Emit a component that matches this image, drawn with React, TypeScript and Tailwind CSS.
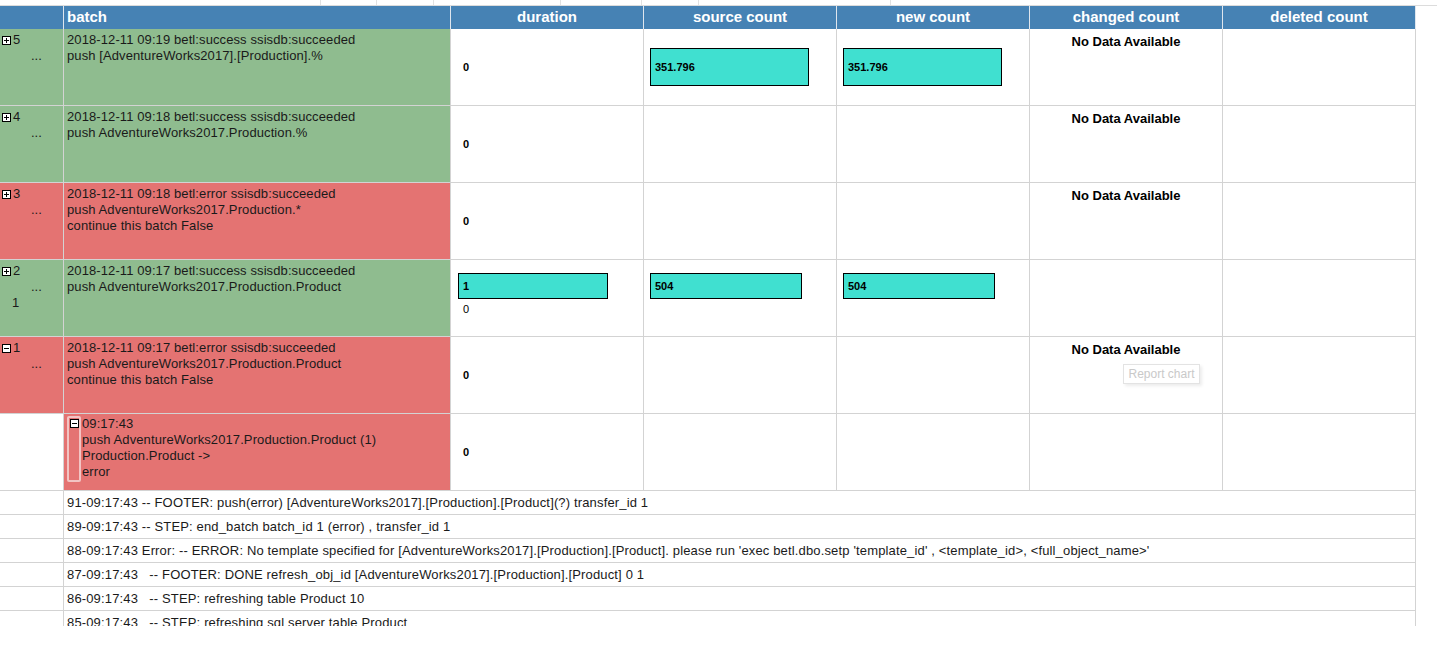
import React from 'react'

type Bar = { value: string; width: number; height: number }

type BatchRow = {
  id: number
  ok: boolean
  expanded?: boolean
  extra?: string
  lines: string[]
  duration?: Bar
  source?: Bar
  target?: Bar
  noData?: boolean
  tooltip?: boolean
}

const rows: BatchRow[] = [
  {
    id: 5,
    ok: true,
    lines: ['2018-12-11 09:19 betl:success ssisdb:succeeded', 'push [AdventureWorks2017].[Production].%'],
    source: { value: '351.796', width: 159, height: 38 },
    target: { value: '351.796', width: 159, height: 38 },
    noData: true,
  },
  {
    id: 4,
    ok: true,
    lines: ['2018-12-11 09:18 betl:success ssisdb:succeeded', 'push AdventureWorks2017.Production.%'],
    noData: true,
  },
  {
    id: 3,
    ok: false,
    lines: ['2018-12-11 09:18 betl:error ssisdb:succeeded', 'push AdventureWorks2017.Production.*', 'continue this batch False'],
    noData: true,
  },
  {
    id: 2,
    ok: true,
    extra: '1',
    lines: ['2018-12-11 09:17 betl:success ssisdb:succeeded', 'push AdventureWorks2017.Production.Product'],
    duration: { value: '1', width: 150, height: 26 },
    source: { value: '504', width: 152, height: 26 },
    target: { value: '504', width: 152, height: 26 },
  },
  {
    id: 1,
    ok: false,
    expanded: true,
    lines: ['2018-12-11 09:17 betl:error ssisdb:succeeded', 'push AdventureWorks2017.Production.Product', 'continue this batch False'],
    noData: true,
    tooltip: true,
  },
]

const logLines = [
  '91-09:17:43 -- FOOTER: push(error) [AdventureWorks2017].[Production].[Product](?) transfer_id 1',
  '89-09:17:43 -- STEP: end_batch batch_id 1 (error) , transfer_id 1',
  "88-09:17:43 Error: -- ERROR: No template specified for [AdventureWorks2017].[Production].[Product]. please run 'exec betl.dbo.setp 'template_id' , <template_id>, <full_object_name>'",
  '87-09:17:43   -- FOOTER: DONE refresh_obj_id [AdventureWorks2017].[Production].[Product] 0 1',
  '86-09:17:43   -- STEP: refreshing table Product 10',
  '85-09:17:43   -- STEP: refreshing sql server table Product',
]

const headers = ['duration', 'source count', 'new count', 'changed count', 'deleted count']

function ToggleIcon({ open }: { open: boolean }) {
  return (
    <svg width="9" height="9" viewBox="0 0 9 9" className="shrink-0">
      <rect x="0.5" y="0.5" width="8" height="8" fill="#fff" stroke="#000" />
      <line x1="2" y1="4.5" x2="7" y2="4.5" stroke="#000" />
      {!open && <line x1="4.5" y1="2" x2="4.5" y2="7" stroke="#000" />}
    </svg>
  )
}

function BarCell({ bar }: { bar: Bar }) {
  return (
    <div
      className="flex items-center border border-black bg-[#40e0d0] pl-[4px] text-[11px] font-bold text-black"
      style={{ width: bar.width, height: bar.height }}
    >
      {bar.value}
    </div>
  )
}

const cell = 'border-r border-b border-[#d3d3d3] relative'

export default function App() {
  const stripes = [321, 56, 57, 127, 81, 57, 192]

  return (
    <div className="w-[1437px] h-[648px] overflow-hidden bg-white font-['Liberation_Sans',Arial,sans-serif] text-[13px] text-[#1a1a1a]">
      <div className="flex h-[6px] border-b border-[#dcdcdc]">
        {stripes.map((w, i) => (
          <div key={i} className="h-full shrink-0 border-r border-[#e2e2e2]" style={{ width: w }} />
        ))}
      </div>

      <div className="h-[620px] w-[1416px] overflow-hidden">
        <div className="grid grid-cols-[64px_387px_193px_193px_193px_193px_193px]">
          <div className="h-[23px] border-r border-[#dfe6ee] bg-[#4682b4]" />
          <div className="flex h-[23px] items-center border-r border-[#dfe6ee] bg-[#4682b4] pl-[3px] text-[15px] font-bold text-white">
            batch
          </div>
          {headers.map((h) => (
            <div
              key={h}
              className="flex h-[23px] items-center justify-center border-r border-[#dfe6ee] bg-[#4682b4] text-[15px] font-bold text-white"
            >
              {h}
            </div>
          ))}

          {rows.map((r) => {
            const bg = r.ok ? 'bg-[#8fbc8f]' : 'bg-[#e47372]'
            return (
              <React.Fragment key={r.id}>
                <div className={`${cell} ${bg} h-[77px] pl-[2px] pt-[3px] leading-[16px]`}>
                  <div className="flex items-center">
                    <ToggleIcon open={!!r.expanded} />
                    <span className="pl-[2px]">{r.id}</span>
                  </div>
                  <div className="pl-[29px]">...</div>
                  {r.extra && <div className="pl-[10px]">{r.extra}</div>}
                </div>
                <div className={`${cell} ${bg} h-[77px] pl-[3px] pt-[3px] leading-[16px] tracking-[0.1px]`}>
                  {r.lines.map((l) => (
                    <div key={l} className="whitespace-nowrap">{l}</div>
                  ))}
                </div>
                <div className={`${cell} h-[77px]`}>
                  {r.duration ? (
                    <div className="flex flex-col pl-[7px] pt-[13px]">
                      <BarCell bar={r.duration} />
                      <div className="pl-[5px] pt-[3px] text-[11px] leading-[14px] text-black">0</div>
                    </div>
                  ) : (
                    <div className="flex h-full items-center pl-[12px] text-[11px] font-bold text-black">0</div>
                  )}
                </div>
                <div className={`${cell} h-[77px]`}>
                  {r.source && (
                    <div className={`flex h-full pl-[6px] ${r.duration ? 'items-start pt-[13px]' : 'items-center'}`}>
                      <BarCell bar={r.source} />
                    </div>
                  )}
                </div>
                <div className={`${cell} h-[77px]`}>
                  {r.target && (
                    <div className={`flex h-full pl-[6px] ${r.duration ? 'items-start pt-[13px]' : 'items-center'}`}>
                      <BarCell bar={r.target} />
                    </div>
                  )}
                </div>
                <div className={`${cell} h-[77px]`}>
                  {r.noData && (
                    <div className="pt-[5px] text-center text-[13px] font-bold leading-[16px] text-black">No Data Available</div>
                  )}
                  {r.tooltip && (
                    <div className="absolute left-[93px] top-[27px] flex h-[20px] w-[77px] items-center justify-center border border-[#e3e3e3] bg-white text-[12px] text-[#c9c9c9] shadow-[2px_2px_3px_rgba(0,0,0,0.08)]">
                      Report chart
                    </div>
                  )}
                </div>
                <div className={`${cell} h-[77px]`} />
              </React.Fragment>
            )
          })}

          <div className={`${cell} h-[77px] bg-white`} />
          <div className={`${cell} h-[77px] bg-[#e47372] flex pl-[3px] pt-[2px] leading-[16px] tracking-[0.1px]`}>
            <div className="flex h-[66px] w-[14px] shrink-0 justify-center rounded-[2px] border-2 border-[#f2c4c3] pt-[1px]">
              <ToggleIcon open />
            </div>
            <div className="pl-px">
              <div>09:17:43</div>
              <div>push AdventureWorks2017.Production.Product (1)</div>
              <div>Production.Product -&gt;</div>
              <div>error</div>
            </div>
          </div>
          <div className={`${cell} h-[77px]`}>
            <div className="flex h-full items-center pl-[12px] text-[11px] font-bold text-black">0</div>
          </div>
          <div className={`${cell} h-[77px]`} />
          <div className={`${cell} h-[77px]`} />
          <div className={`${cell} h-[77px]`} />
          <div className={`${cell} h-[77px]`} />

          {logLines.map((l) => (
            <React.Fragment key={l}>
              <div className={`${cell} h-[24px]`} />
              <div className={`${cell} col-span-6 flex h-[24px] items-center whitespace-pre pl-[3px] tracking-[0.15px]`}>{l}</div>
            </React.Fragment>
          ))}
        </div>
      </div>
    </div>
  )
}
